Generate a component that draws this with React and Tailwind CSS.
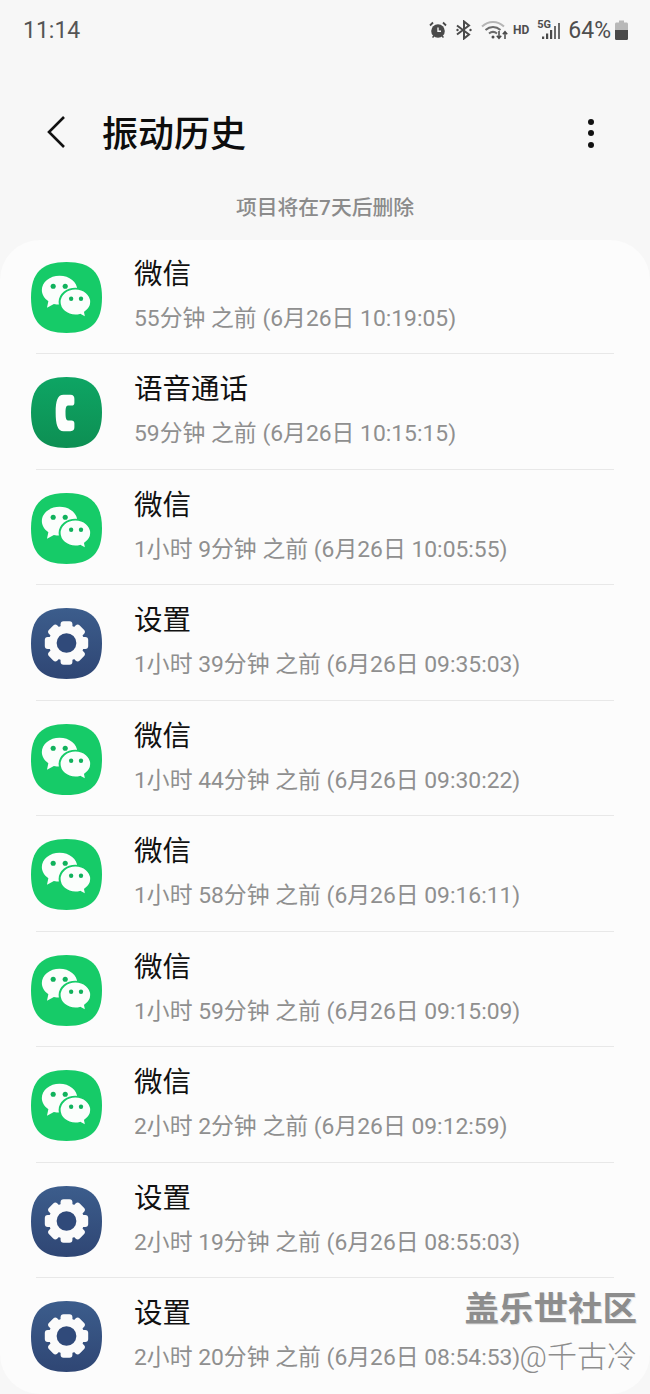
const font = "font-['Roboto','Noto_Sans_CJK_SC',sans-serif]"

const rows = [
  ['wechat', '微信', '55分钟 之前 (6月26日 10:19:05)'],
  ['call', '语音通话', '59分钟 之前 (6月26日 10:15:15)'],
  ['wechat', '微信', '1小时 9分钟 之前 (6月26日 10:05:55)'],
  ['settings', '设置', '1小时 39分钟 之前 (6月26日 09:35:03)'],
  ['wechat', '微信', '1小时 44分钟 之前 (6月26日 09:30:22)'],
  ['wechat', '微信', '1小时 58分钟 之前 (6月26日 09:16:11)'],
  ['wechat', '微信', '1小时 59分钟 之前 (6月26日 09:15:09)'],
  ['wechat', '微信', '2小时 2分钟 之前 (6月26日 09:12:59)'],
  ['settings', '设置', '2小时 19分钟 之前 (6月26日 08:55:03)'],
  ['settings', '设置', '2小时 20分钟 之前 (6月26日 08:54:53)'],
]

const squircle = 'M36 0C61 0 72 11 72 36C72 61 61 72 36 72C11 72 0 61 0 36C0 11 11 0 36 0Z'

function WechatIcon() {
  return (
    <svg width="71" height="71" viewBox="0 0 72 72" className="mt-[3px] shrink-0">
      <path d={squircle} fill="#16cb68" />
      <path d="M29 14C19 14 11 20.4 11 28.5C11 33.2 13.6 37 17.6 39.8L16.2 46.5L23.2 42.6C25 43 27 43.2 29 43.2C39 43.2 47 36.6 47 28.5C47 20.4 39 14 29 14Z" fill="#fbfefc" />
      <path d="M45 27C36.2 27 29 33 29 40.6C29 48.2 36.2 54.2 45 54.2C46.6 54.2 48.2 54 49.8 53.6L56 57L54.8 51C58.6 48.4 61 44.8 61 40.6C61 33 53.8 27 45 27Z" fill="#fbfefc" stroke="#16cb68" strokeWidth="2" />
      <circle cx="22.5" cy="24.6" r="2.6" fill="#10b25c" />
      <circle cx="34.7" cy="24.6" r="2.6" fill="#10b25c" />
      <circle cx="40.7" cy="37.3" r="2.2" fill="#10b25c" />
      <circle cx="50.7" cy="37.3" r="2.2" fill="#10b25c" />
    </svg>
  )
}

function CallIcon() {
  return (
    <svg width="71" height="71" viewBox="0 0 72 72" className="mt-[3px] shrink-0">
      <defs>
        <linearGradient id="callBg" x1="0" y1="0" x2="0" y2="1">
          <stop offset="0" stopColor="#0ea564" />
          <stop offset="1" stopColor="#0d8f53" />
        </linearGradient>
      </defs>
      <path d={squircle} fill="url(#callBg)" />
      <path d="M33 18C27 18 25 24 25 36C25 48 27 55 33 55L40 55C43 55 44 53 44 51L44 47C44 45 43 44 41 44L37.5 44C35.5 44 35 41 35 36.5C35 32 35.5 29 37.5 29L41 29C43 29 44 28 44 26L44 22C44 20 43 18 40 18Z" fill="#fdfefd" />
    </svg>
  )
}

function SettingsIcon() {
  return (
    <svg width="71" height="71" viewBox="0 0 72 72" className="mt-[3px] shrink-0">
      <defs>
        <linearGradient id="setBg" x1="0" y1="0" x2="0" y2="1">
          <stop offset="0" stopColor="#3c5d8c" />
          <stop offset="1" stopColor="#2f4674" />
        </linearGradient>
      </defs>
      <path d={squircle} fill="url(#setBg)" />
      <circle cx="36" cy="35.5" r="18" fill="#fbfbfb" />
      {[0, 45, 90, 135, 180, 225, 270, 315].map((a) => (
        <rect key={a} x="30" y="13.5" width="12" height="10" rx="3" fill="#fbfbfb" transform={`rotate(${a} 36 35.5)`} />
      ))}
      <circle cx="36" cy="35.5" r="10" fill="#304a7a" />
    </svg>
  )
}

const icons = { wechat: WechatIcon, call: CallIcon, settings: SettingsIcon }

function StatusIcons() {
  return (
    <div className="flex items-center text-[#4e4e4e]">
      <svg width="18" height="18" viewBox="0 0 18 18">
        <circle cx="9" cy="10" r="6.8" fill="#4a4a4a" />
        <path d="M1 4.5L4 1.5M17 4.5L14 1.5" stroke="#4a4a4a" strokeWidth="1.8" />
        <path d="M3.5 16.5L5 15M14.5 16.5L13 15" stroke="#4a4a4a" strokeWidth="1.6" />
        <path d="M9 6.5V10.2H12" stroke="#f7f7f7" strokeWidth="1.4" fill="none" />
      </svg>
      <svg width="18" height="20" viewBox="0 0 18 20" className="ml-[8px]">
        <path d="M2 5.5L14 14.5L9 18.5V1.5L14 5.5L2 14.5" stroke="#4a4a4a" strokeWidth="2" fill="none" />
        <circle cx="2.5" cy="10" r="1.2" fill="#4a4a4a" />
        <circle cx="15.5" cy="10" r="1.2" fill="#4a4a4a" />
      </svg>
      <svg width="27" height="20" viewBox="0 0 27 20" className="ml-[8px]">
        <path d="M1 6.5C7.5 .5 16.5 .5 23 6.5" stroke="#b5b5b5" strokeWidth="2" fill="none" />
        <path d="M4.5 10C9 6 15 6 19.5 10" stroke="#6a6a6a" strokeWidth="2" fill="none" />
        <path d="M8 13.5C10.5 11.5 13.5 11.5 16 13.5" stroke="#6a6a6a" strokeWidth="2" fill="none" />
        <circle cx="12" cy="17" r="1.5" fill="#4a4a4a" />
        <path d="M18 11V18M15.8 15.8L18 18.4L20.2 15.8" stroke="#4a4a4a" strokeWidth="1.5" fill="none" />
        <path d="M24 19V12M21.8 14.2L24 11.6L26.2 14.2" stroke="#4a4a4a" strokeWidth="1.5" fill="none" />
      </svg>
      <span className="ml-[5px] text-[12px] leading-none font-bold">HD</span>
      <div className="relative ml-[8px] h-[20px] w-[24px]">
        <span className="absolute left-0 top-[-1px] text-[11px] leading-none font-bold">5G</span>
        <svg width="24" height="20" viewBox="0 0 24 20" className="absolute left-0 top-0">
          <rect x="5" y="16.5" width="2.2" height="2.5" fill="#4a4a4a" />
          <rect x="9" y="13.5" width="2.2" height="5.5" fill="#4a4a4a" />
          <rect x="13" y="10" width="2.2" height="9" fill="#4a4a4a" />
          <rect x="17" y="6" width="2" height="13" fill="#6a6a6a" />
          <rect x="21" y="3" width="2" height="16" fill="#6a6a6a" />
        </svg>
      </div>
      <span className="ml-[7px] text-[23px] leading-none">64%</span>
      <svg width="13" height="20" viewBox="0 0 13 20" className="ml-[4px]">
        <path d="M4 0.5H9V2.5H11.5C12.3 2.5 13 3.2 13 4V18.5C13 19.3 12.3 20 11.5 20H1.5C.7 20 0 19.3 0 18.5V4C0 3.2 .7 2.5 1.5 2.5H4Z" fill="#b8b8b8" />
        <path d="M0 10H13V18.5C13 19.3 12.3 20 11.5 20H1.5C.7 20 0 19.3 0 18.5Z" fill="#4a4a4a" />
      </svg>
    </div>
  )
}

export default function App() {
  return (
    <div className={`relative h-[1394px] w-[650px] overflow-hidden bg-[#f7f7f7] ${font}`}>
      {/* status bar */}
      <div className="flex h-[60px] items-center justify-between pl-[23px] pr-[22px]">
        <span className="text-[23px] leading-none text-[#555]">11:14</span>
        <StatusIcons />
      </div>

      {/* header */}
      <div className="mt-[44px] flex h-[58px] items-center pl-[46px] pr-[56px]">
        <svg width="20" height="34" viewBox="0 0 20 34" className="-mt-[2px]">
          <path d="M18 2L3 17L18 32" stroke="#111" strokeWidth="2.6" fill="none" />
        </svg>
        <h1 className="ml-[36px] mt-[3px] flex-1 text-[36px] leading-none font-medium text-[#0d0d0d]">振动历史</h1>
        <div className="flex flex-col gap-[5.5px]">
          <span className="h-[6px] w-[6px] rounded-full bg-[#111]" />
          <span className="h-[6px] w-[6px] rounded-full bg-[#111]" />
          <span className="h-[6px] w-[6px] rounded-full bg-[#111]" />
        </div>
      </div>

      <p className="mt-[32px] text-center text-[20.8px] leading-[28px] font-medium text-[#8b8b8b]">项目将在7天后删除</p>

      {/* list */}
      <div className="mt-[18px] h-[1154px] overflow-hidden rounded-[40px] bg-[#fcfcfc]">
        <div className="-mt-[1.5px]">
          {rows.map(([icon, title, time], i) => {
            const Icon = icons[icon]
            return (
              <div key={i}>
                {i > 0 && <div className="mx-[36px] h-px bg-[#e8e8e8]" />}
                <div className="flex h-[114.5px] items-center pl-[31px]">
                  <Icon />
                  <div className="-mt-[3px] ml-[32px]">
                    <div className="text-[28.5px] leading-[40px] text-[#111]">{title}</div>
                    <div className="mt-[9px] text-[22.85px] leading-[30px] whitespace-nowrap text-[#8f8f8f]">{time}</div>
                  </div>
                </div>
              </div>
            )
          })}
        </div>
      </div>

      {/* watermark */}
      <div className="absolute right-[13px] top-[1288px] text-[34.5px] leading-[42px] font-bold whitespace-nowrap text-[#8d8d8d] [text-shadow:1px_1px_0_#e4e4e4]">盖乐世社区</div>
      <div className="absolute right-[13px] top-[1339px] text-[30px] leading-[36px] font-light whitespace-nowrap text-[#8d8d8d]">@千古冷</div>
    </div>
  )
}
